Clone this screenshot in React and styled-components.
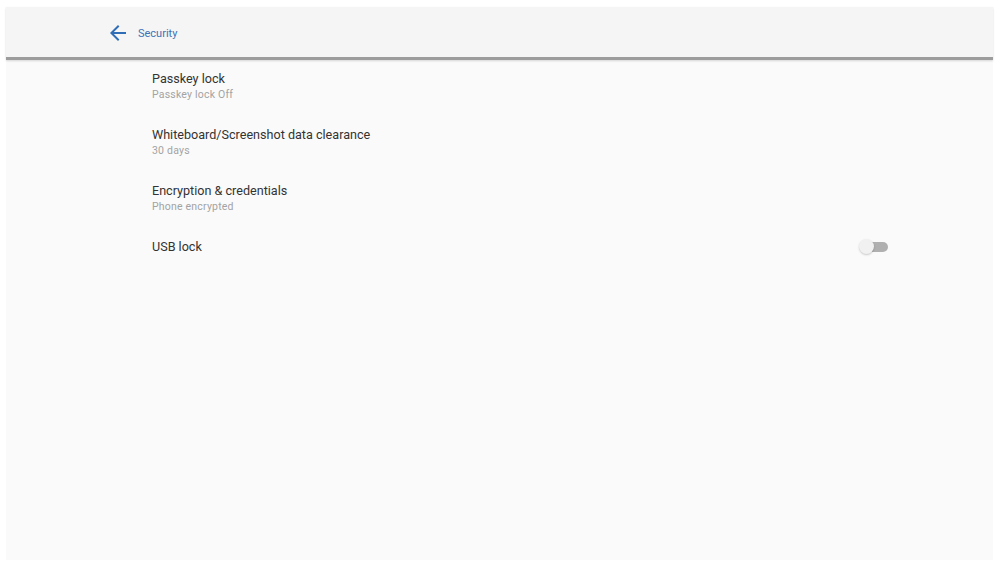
import React from 'react';
import styled, { createGlobalStyle } from 'styled-components';

const GlobalStyle = createGlobalStyle`
  html, body {
    margin: 0;
    padding: 0;
    background: #ffffff;
    font-family: Roboto, "Liberation Sans", Arial, sans-serif;
  }
`;

const Frame = styled.div`
  width: 998px;
  height: 564px;
  box-sizing: border-box;
  padding: 7px 5px 4px 6px;
  background: #ffffff;
`;

const Screen = styled.div`
  height: 100%;
  display: flex;
  flex-direction: column;
  background: #fafafa;
`;

const Header = styled.header`
  height: 50px;
  flex-shrink: 0;
  display: flex;
  align-items: center;
  padding-left: 100px;
  background: #f5f5f5;
  border-bottom: 3px solid #9c9c9c;
  box-shadow: 0 1px 2px rgba(0, 0, 0, 0.15);
`;

const BackButton = styled.button`
  display: flex;
  align-items: center;
  border: none;
  background: none;
  padding: 0;
  margin: 2px 8px 0 0;
  color: #2f6db6;
  cursor: pointer;
`;

const Title = styled.h1`
  margin: 2px 0 0;
  font-size: 11px;
  font-weight: 400;
  color: #3b72b8;
`;

const List = styled.ul`
  list-style: none;
  margin: 0;
  padding: 9px 0 0 146px;
`;

const Row = styled.li`
  height: 56px;
  display: flex;
  align-items: flex-start;
  justify-content: space-between;
  padding-right: 104px;
`;

const Text = styled.div`
  display: flex;
  flex-direction: column;
  padding-top: 1px;
`;

const Label = styled.span`
  font-size: 12.6px;
  line-height: 17px;
  color: #333333;
`;

const Summary = styled.span`
  margin-top: 1px;
  font-size: 10.5px;
  letter-spacing: 0.2px;
  line-height: 13px;
  color: #a3a3a3;
`;

const Switch = styled.span`
  position: relative;
  margin: 2px 1px 0 0;
  width: 29px;
  height: 15px;
  display: flex;
  align-items: center;

  &::before {
    content: '';
    width: 22px;
    height: 10px;
    margin-left: 7px;
    border-radius: 5px;
    background: #b0b0b0;
  }

  &::after {
    content: '';
    position: absolute;
    left: 0;
    top: 0;
    width: 15px;
    height: 15px;
    border-radius: 50%;
    background: #f1f1f1;
    box-shadow: 0 1px 2px rgba(0, 0, 0, 0.2);
  }
`;

const items = [
  { label: 'Passkey lock', summary: 'Passkey lock Off' },
  { label: 'Whiteboard/Screenshot data clearance', summary: '30 days' },
  { label: 'Encryption & credentials', summary: 'Phone encrypted' },
  { label: 'USB lock', toggle: true }
];

export default function App() {
  return (
    <>
      <GlobalStyle />
      <Frame>
        <Screen>
          <Header>
            <BackButton aria-label="Back">
              <svg width="24" height="24" viewBox="0 0 24 24" fill="currentColor">
                <path d="M20 11H7.83l5.59-5.59L12 4l-8 8 8 8 1.41-1.41L7.83 13H20v-2z" />
              </svg>
            </BackButton>
            <Title>Security</Title>
          </Header>
          <List>
            {items.map(item => (
              <Row key={item.label}>
                <Text>
                  <Label>{item.label}</Label>
                  {item.summary && <Summary>{item.summary}</Summary>}
                </Text>
                {item.toggle && <Switch />}
              </Row>
            ))}
          </List>
        </Screen>
      </Frame>
    </>
  );
}
